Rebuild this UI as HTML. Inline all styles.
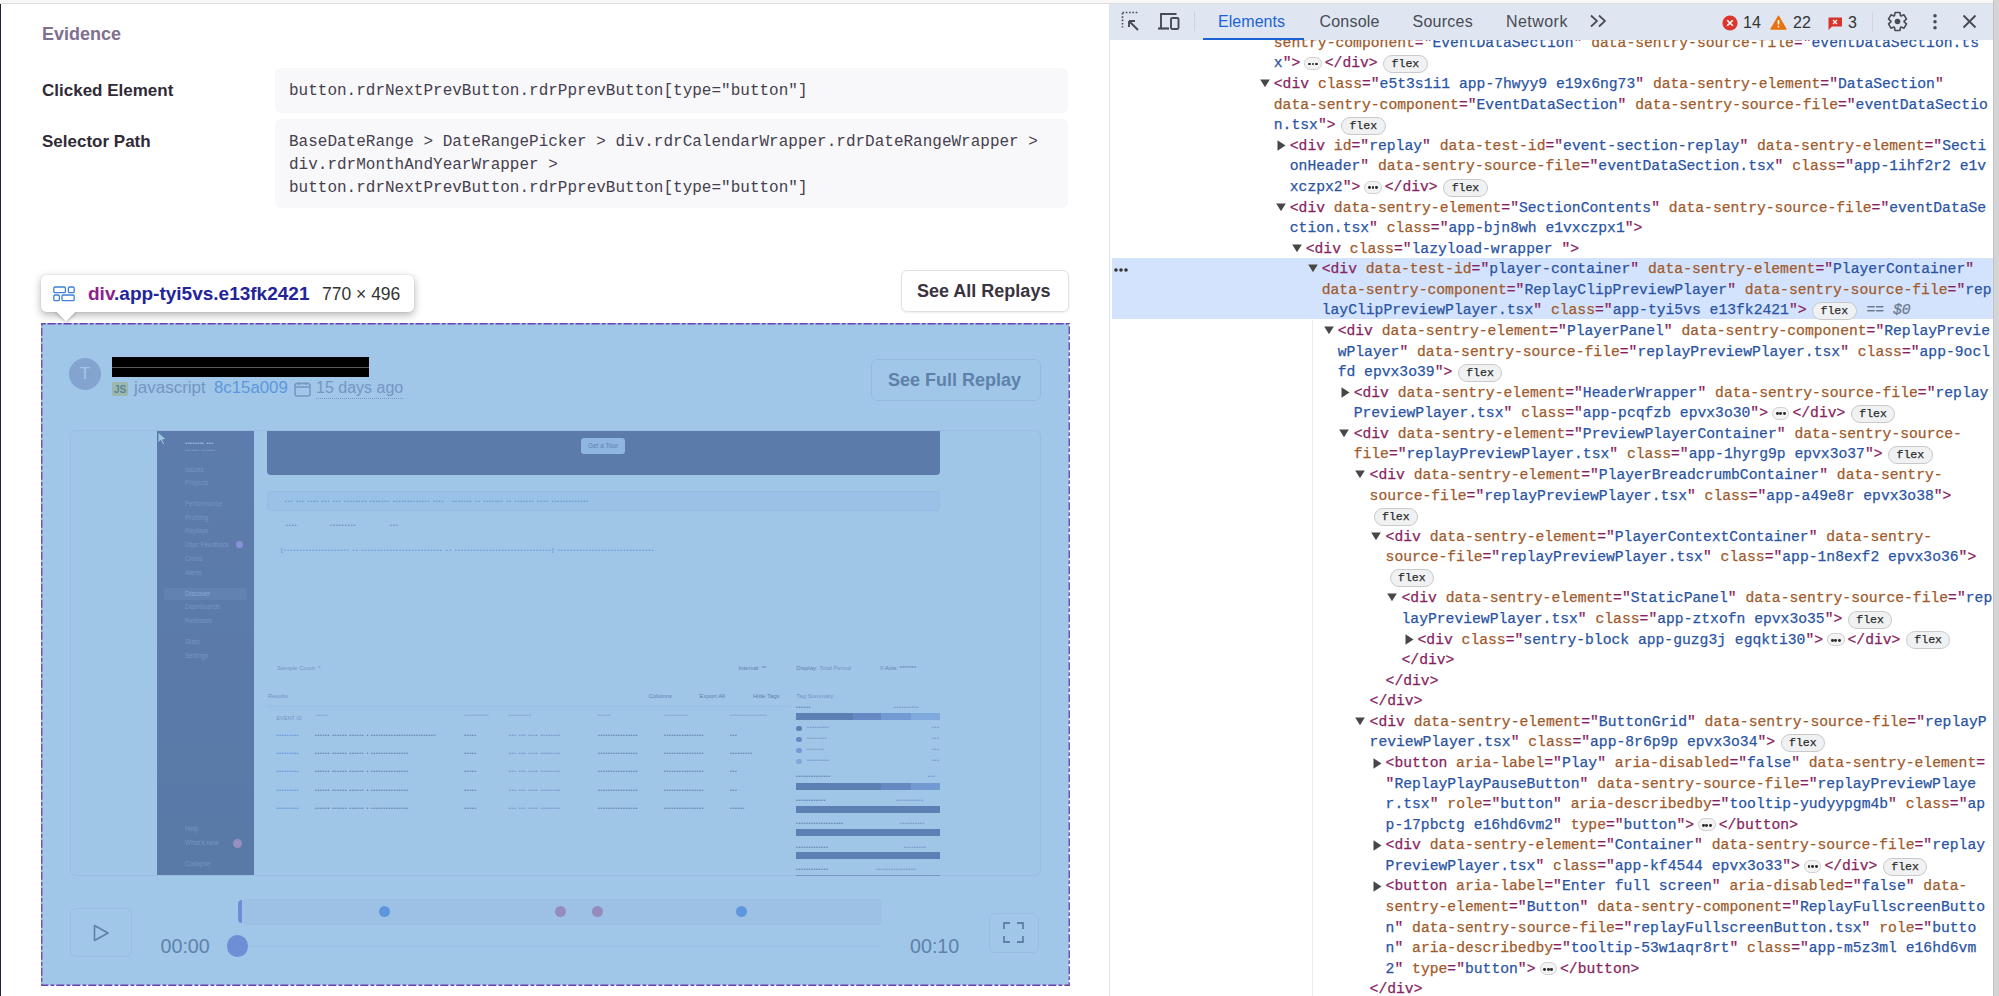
<!DOCTYPE html>
<html><head><meta charset="utf-8">
<style>
*{box-sizing:border-box;margin:0;padding:0}
html,body{width:1999px;height:996px;overflow:hidden;background:#fff}
body{position:relative;font-family:"Liberation Sans",sans-serif;color:#2b2233}
.a{position:absolute}
.topstrip{left:0;top:0;width:1999px;height:3px;background:#f8f8f8}
.topline{left:0;top:3px;width:1999px;height:1px;background:#dcdcdc}
.lborder{left:0;top:4px;width:1.4px;height:992px;background:#2c1c3c}
.lbl{position:absolute;left:42px;font-weight:700;font-size:17px;color:#302a36;white-space:pre}
.codebox{position:absolute;left:275px;width:793px;background:#f8f8fa;border-radius:6px}
.mono{font-family:"Liberation Mono",monospace;font-size:16px;color:#463f4e;white-space:pre;position:absolute;left:289px}
/* devtools */
.dt{left:1109px;top:4px;width:890px;height:992px;background:#fff}
.dtbar{left:1109px;top:4px;width:884.3px;height:36px;background:#dfe6f1}
.dtl{left:1109.2px;top:4px;width:1.2px;height:992px;background:#dbe4ee}
.tab{position:absolute;top:12px;font-size:16px;color:#474b52;white-space:pre;line-height:20px}
.row{position:absolute;-webkit-text-stroke:0.25px;font-family:"Liberation Mono",monospace;font-size:14.7px;line-height:20.55px;height:20.55px;white-space:pre;color:#1f1f1f}
.tri{position:absolute;line-height:0}
.eb{display:inline-block;width:17.5px;height:13px;border:1px solid #cfcfcf;background:#f3f3f3;border-radius:7px;vertical-align:middle;margin:0 3px 0 4px;position:relative;top:0px;text-align:center;line-height:0;padding-top:3.4px}
.eb i{display:inline-block;width:2.8px;height:2.8px;border-radius:50%;background:#2a2a2a;margin:0 0.4px}
.fb{display:inline-block;font-family:"Liberation Mono",monospace;font-size:11.5px;line-height:15.5px;height:18px;padding:0 8px;border:1px solid #c9c9c9;background:#f0f1f3;border-radius:9px;color:#2a2a2a;margin-left:5.5px;vertical-align:middle;position:relative;top:0.5px;width:44.5px;padding:0;text-align:center}
.fb.f0{margin-left:4px}
.s0{color:#6c7a8c;margin-left:10px}
.s0 em{font-style:italic}
.sel{left:1112px;top:258px;width:882px;height:60.6px;background:#d3e3fd}
.guide{left:1312px;top:320px;width:1px;height:676px;background:#ececec}
#player div[style*="font-size:5px"]{font-weight:700}
.sb{left:1993.3px;top:0;width:6px;height:996px;background:#d4d3d5;border-left:1.5px solid #c3c3c5}
</style></head><body>
<div class="a topstrip"></div>
<div class="a topline"></div>
<div class="a lborder"></div>

<!-- left page -->
<div class="a" style="left:42px;top:23px;font-size:18px;font-weight:700;color:#80708f;line-height:22px">Evidence</div>
<div class="lbl" style="top:80.4px;line-height:22px">Clicked Element</div>
<div class="lbl" style="top:131.4px;line-height:22px">Selector Path</div>
<div class="codebox" style="top:68px;height:45px"></div>
<div class="codebox" style="top:118.5px;height:89px"></div>
<div class="mono" style="top:80px;line-height:22px">button.rdrNextPrevButton.rdrPprevButton[type="button"]</div>
<div class="mono" style="top:130.5px;line-height:23.2px">BaseDateRange &gt; DateRangePicker &gt; div.rdrCalendarWrapper.rdrDateRangeWrapper &gt;
div.rdrMonthAndYearWrapper &gt;
button.rdrNextPrevButton.rdrPprevButton[type="button"]</div>

<!-- See all replays button -->
<div class="a" style="left:900.5px;top:270px;width:168px;height:42px;border:1px solid #e1e0e4;border-radius:6px;box-shadow:0 1px 2px rgba(43,34,51,0.07)"></div>
<div class="a" style="left:917px;top:280px;font-size:18px;font-weight:700;color:#3a3340;line-height:22px;white-space:pre">See All Replays</div>

<!-- player underlying content -->
<div class="a" id="player" style="left:41px;top:323px;width:1028px;height:662px;background:#fff;overflow:hidden">
  <!-- header -->
  <div class="a" style="left:28px;top:35px;width:32px;height:32px;border-radius:50%;background:#a89db4;color:#fff;font-size:17px;text-align:center;line-height:32px">T</div>
  <div class="a" style="left:71px;top:58.5px;width:16px;height:14px;background:#f0d94a;border-radius:2px;font-size:10px;font-weight:700;line-height:15px;text-align:center;color:#3a3a2a">JS</div>
  <div class="a" style="left:93px;top:55px;font-size:17px;color:#80708f;white-space:pre;line-height:20px">javascript</div>
  <div class="a" style="left:173px;top:55px;font-size:16.8px;color:#3d74db;white-space:pre;line-height:20px">8c15a009</div>
  <svg class="a" style="left:253px;top:59px" width="17" height="15" viewBox="0 0 17 15"><rect x="1" y="1.5" width="15" height="12.5" rx="2" fill="none" stroke="#80708f" stroke-width="1.5"/><line x1="1" y1="5" x2="16" y2="5" stroke="#80708f" stroke-width="1.5"/><line x1="5" y1="0" x2="5" y2="3" stroke="#80708f" stroke-width="1.5"/><line x1="12" y1="0" x2="12" y2="3" stroke="#80708f" stroke-width="1.5"/></svg>
  <div class="a" style="left:275px;top:55px;font-size:16px;color:#80708f;white-space:pre;line-height:20px;border-bottom:1.5px dotted #80708f;height:21px">15 days ago</div>
  <div class="a" style="left:830px;top:36px;width:170px;height:42px;border:1px solid #e0dce5;border-radius:6px"></div>
  <div class="a" style="left:847px;top:46px;font-size:18px;font-weight:700;color:#3e3446;white-space:pre;line-height:22px">See Full Replay</div>

  <!-- replay frame -->
  <div class="a" style="left:29px;top:107px;width:971px;height:446px;border:1px solid #e6e3ea;border-radius:6px;background:#fbfbfc"></div>
  <div class="a" style="left:116px;top:108px;width:97px;height:444px;background:linear-gradient(180deg,#3b2852 0%,#35224a 50%,#2f1f40 100%)">
    <div class="a" style="left:28px;top:7.5px;font-size:6px;line-height:8px;color:#e8e0f0;white-space:pre;letter-spacing:0.3px">•••••••• •••</div>
    <div class="a" style="left:28px;top:15px;font-size:5px;line-height:8px;color:#8f81a6;white-space:pre;letter-spacing:0.3px">••••••• •••••••</div>
    <div class="a" style="left:7px;top:156.5px;width:83px;height:12.5px;border-radius:3px;background:rgba(255,255,255,0.10)"></div>
    <div class="a" style="left:28px;top:33.8px;font-size:6.5px;line-height:10px;color:#7d6f98;white-space:pre">Issues</div>
    <div class="a" style="left:28px;top:47.3px;font-size:6.5px;line-height:10px;color:#7d6f98;white-space:pre">Projects</div>
    <div class="a" style="left:28px;top:68.3px;font-size:6.5px;line-height:10px;color:#7d6f98;white-space:pre">Performance</div>
    <div class="a" style="left:28px;top:81.6px;font-size:6.5px;line-height:10px;color:#7d6f98;white-space:pre">Profiling</div>
    <div class="a" style="left:28px;top:95.3px;font-size:6.5px;line-height:10px;color:#7d6f98;white-space:pre">Replays</div>
    <div class="a" style="left:28px;top:108.8px;font-size:6.5px;line-height:10px;color:#7d6f98;white-space:pre">User Feedback</div>
    <div class="a" style="left:28px;top:122.6px;font-size:6.5px;line-height:10px;color:#7d6f98;white-space:pre">Crons</div>
    <div class="a" style="left:28px;top:136.7px;font-size:6.5px;line-height:10px;color:#7d6f98;white-space:pre">Alerts</div>
    <div class="a" style="left:28px;top:157.5px;font-size:6.5px;line-height:10px;color:#b9acd0;white-space:pre">Discover</div>
    <div class="a" style="left:28px;top:170.7px;font-size:6.5px;line-height:10px;color:#7d6f98;white-space:pre">Dashboards</div>
    <div class="a" style="left:28px;top:184.7px;font-size:6.5px;line-height:10px;color:#7d6f98;white-space:pre">Releases</div>
    <div class="a" style="left:28px;top:205.5px;font-size:6.5px;line-height:10px;color:#7d6f98;white-space:pre">Stats</div>
    <div class="a" style="left:28px;top:219.6px;font-size:6.5px;line-height:10px;color:#7d6f98;white-space:pre">Settings</div>
    <div class="a" style="left:28px;top:393.0px;font-size:6.5px;line-height:10px;color:#7d6f98;white-space:pre">Help</div>
    <div class="a" style="left:28px;top:407.0px;font-size:6.5px;line-height:10px;color:#7d6f98;white-space:pre">What's new</div>
    <div class="a" style="left:28px;top:428.0px;font-size:6.5px;line-height:10px;color:#7d6f98;white-space:pre">Collapse</div>
    <div class="a" style="left:79px;top:110px;width:7px;height:7px;border-radius:50%;background:#b463d0"></div>
    <div class="a" style="left:76px;top:408px;width:9px;height:9px;border-radius:50%;background:#e05f8a"></div>
  </div>
  <svg class="a" style="left:116px;top:108px" width="11" height="15" viewBox="0 0 11 15"><path d="M1 1L1 12L3.8 9.4L5.8 13.8L7.6 13L5.7 8.8L9.5 8.6Z" fill="#fff" stroke="#222" stroke-width="1"/></svg>
  <!-- banner -->
  <div class="a" style="left:226px;top:108px;width:673px;height:44px;background:#36254a;border-radius:0 0 4px 4px"></div>
  <div class="a" style="left:540px;top:115px;width:44px;height:16px;background:#c9cfe6;border-radius:3px;font-size:6.5px;color:#3e3446;text-align:center;line-height:16px">Get a Tour</div>
  <!-- alert -->
  <div class="a" style="left:226px;top:168px;width:673px;height:20px;background:#ecf2fb;border:1px solid #dbe6f6;border-radius:3px"></div>
  <div class="a" style="left:244px;top:172.7px;font-size:5px;line-height:10px;color:#4a6fb0;white-space:pre;letter-spacing:1.15px">••• ••• •••• ••• ••• •••••••• ••••••• ••••••••••••• ••••   ••••••• •• ••••••• •• ••••••• •••• •••••••••••••</div>
  <div class="a" style="left:245px;top:197.4px;font-size:5px;line-height:10px;color:#555;white-space:pre;letter-spacing:1.2px">••••</div>
  <div class="a" style="left:289px;top:197.4px;font-size:5px;line-height:10px;color:#555;white-space:pre;letter-spacing:1.2px">•••••••••</div>
  <div class="a" style="left:349px;top:197.4px;font-size:5px;line-height:10px;color:#555;white-space:pre;letter-spacing:1.2px">•••</div>
  <div class="a" style="left:240px;top:222.2px;font-size:5px;line-height:10px;color:#4a7bd0;white-space:pre;letter-spacing:1.38px">[••••••••••••••••••••• •• •••••••••••••••••••••••••• •• •••••••••••••••••••••••••••••••] •••••••••••••••••••••••••••••••</div>
  <div class="a" style="left:236px;top:339.7px;font-size:6px;line-height:10px;color:#80708f;white-space:pre;">Sample Count  *</div>
  <div class="a" style="left:697.4px;top:339.7px;font-size:6px;line-height:10px;color:#3e3446;white-space:pre;">Interval: **</div>
  <div class="a" style="left:755.3px;top:339.7px;font-size:6px;line-height:10px;color:#3e3446;white-space:pre;">Display: <span style="color:#80708f">Total Period</span></div>
  <div class="a" style="left:838.5px;top:339.7px;font-size:6px;line-height:10px;color:#3e3446;white-space:pre;">Y-Axis: *******</div>
  <div class="a" style="left:226.7px;top:367.9px;font-size:6px;line-height:10px;color:#80708f;white-space:pre;">Results</div>
  <div class="a" style="left:607.4px;top:368.4px;font-size:6px;line-height:10px;color:#3e3446;white-space:pre;">Columns</div>
  <div class="a" style="left:658.6px;top:368.4px;font-size:6px;line-height:10px;color:#3e3446;white-space:pre;">Export All</div>
  <div class="a" style="left:712px;top:368.4px;font-size:6px;line-height:10px;color:#3e3446;white-space:pre;">Hide Tags</div>
  <div class="a" style="left:755.3px;top:368.4px;font-size:6px;line-height:10px;color:#80708f;white-space:pre;">Tag Summary</div>
  <div class="a" style="left:226px;top:383px;width:522px;height:1px;background:#ebe8ef"></div>
  <div class="a" style="left:235.4px;top:389.6px;font-size:5.5px;line-height:10px;color:#80708f;white-space:pre;">EVENT ID</div>
  <div class="a" style="left:275px;top:387.4px;font-size:5px;line-height:10px;color:#9a8fab;white-space:pre;letter-spacing:0.75px;">•••••</div>
  <div class="a" style="left:423.3px;top:387.4px;font-size:5px;line-height:10px;color:#9a8fab;white-space:pre;letter-spacing:0.75px;">••••••••••</div>
  <div class="a" style="left:468px;top:387.4px;font-size:5px;line-height:10px;color:#9a8fab;white-space:pre;letter-spacing:0.75px;">•••••••••</div>
  <div class="a" style="left:557px;top:387.4px;font-size:5px;line-height:10px;color:#9a8fab;white-space:pre;letter-spacing:0.75px;">•••••</div>
  <div class="a" style="left:623px;top:387.4px;font-size:5px;line-height:10px;color:#9a8fab;white-space:pre;letter-spacing:0.75px;">••••••••••</div>
  <div class="a" style="left:689px;top:387.4px;font-size:5px;line-height:10px;color:#9a8fab;white-space:pre;letter-spacing:0.75px;">•••••••••••••••</div>
  <div class="a" style="left:235.4px;top:407.2px;font-size:5px;line-height:10px;color:#3d74db;white-space:pre;letter-spacing:0.75px;">•••••••••</div>
  <div class="a" style="left:235.4px;top:425.3px;font-size:5px;line-height:10px;color:#3d74db;white-space:pre;letter-spacing:0.75px;">•••••••••</div>
  <div class="a" style="left:235.4px;top:443.3px;font-size:5px;line-height:10px;color:#3d74db;white-space:pre;letter-spacing:0.75px;">•••••••••</div>
  <div class="a" style="left:235.4px;top:461.9px;font-size:5px;line-height:10px;color:#3d74db;white-space:pre;letter-spacing:0.75px;">•••••••••</div>
  <div class="a" style="left:235.4px;top:480.0px;font-size:5px;line-height:10px;color:#3d74db;white-space:pre;letter-spacing:0.75px;">•••••••••</div>
  <div class="a" style="left:274px;top:407.2px;font-size:5px;line-height:10px;color:#3e3446;white-space:pre;letter-spacing:0.75px;">•••••• •••••• •••••• • ••••••••••••••••••••••••••</div>
  <div class="a" style="left:274px;top:425.3px;font-size:5px;line-height:10px;color:#3e3446;white-space:pre;letter-spacing:0.75px;">•••••• •••••• •••••• • •••••••••••••••</div>
  <div class="a" style="left:274px;top:443.3px;font-size:5px;line-height:10px;color:#3e3446;white-space:pre;letter-spacing:0.75px;">•••••• •••••• •••••• • •••••••••••••••</div>
  <div class="a" style="left:274px;top:461.9px;font-size:5px;line-height:10px;color:#3e3446;white-space:pre;letter-spacing:0.75px;">•••••• •••••• •••••• • •••••••••••••••</div>
  <div class="a" style="left:274px;top:480.0px;font-size:5px;line-height:10px;color:#3e3446;white-space:pre;letter-spacing:0.75px;">•••••• •••••• •••••• • •••••••••••••••</div>
  <div class="a" style="left:423.3px;top:407.2px;font-size:5px;line-height:10px;color:#3e3446;white-space:pre;letter-spacing:0.75px;">•••••</div>
  <div class="a" style="left:423.3px;top:425.3px;font-size:5px;line-height:10px;color:#3e3446;white-space:pre;letter-spacing:0.75px;">•••••</div>
  <div class="a" style="left:423.3px;top:443.3px;font-size:5px;line-height:10px;color:#3e3446;white-space:pre;letter-spacing:0.75px;">•••••</div>
  <div class="a" style="left:423.3px;top:461.9px;font-size:5px;line-height:10px;color:#3e3446;white-space:pre;letter-spacing:0.75px;">•••••</div>
  <div class="a" style="left:423.3px;top:480.0px;font-size:5px;line-height:10px;color:#3e3446;white-space:pre;letter-spacing:0.75px;">•••••</div>
  <div class="a" style="left:468px;top:407.2px;font-size:5px;line-height:10px;color:#80708f;white-space:pre;letter-spacing:0.75px;">••• ••• •••• ••••••••</div>
  <div class="a" style="left:468px;top:425.3px;font-size:5px;line-height:10px;color:#80708f;white-space:pre;letter-spacing:0.75px;">••• ••• •••• ••••••••</div>
  <div class="a" style="left:468px;top:443.3px;font-size:5px;line-height:10px;color:#80708f;white-space:pre;letter-spacing:0.75px;">••• ••• •••• ••••••••</div>
  <div class="a" style="left:468px;top:461.9px;font-size:5px;line-height:10px;color:#80708f;white-space:pre;letter-spacing:0.75px;">••• ••• •••• ••••••••</div>
  <div class="a" style="left:468px;top:480.0px;font-size:5px;line-height:10px;color:#80708f;white-space:pre;letter-spacing:0.75px;">••• ••• •••• ••••••••</div>
  <div class="a" style="left:557px;top:407.2px;font-size:5px;line-height:10px;color:#3e3446;white-space:pre;letter-spacing:0.75px;">••••••••••••••••</div>
  <div class="a" style="left:557px;top:425.3px;font-size:5px;line-height:10px;color:#3e3446;white-space:pre;letter-spacing:0.75px;">••••••••••••••••</div>
  <div class="a" style="left:557px;top:443.3px;font-size:5px;line-height:10px;color:#3e3446;white-space:pre;letter-spacing:0.75px;">••••••••••••••••</div>
  <div class="a" style="left:557px;top:461.9px;font-size:5px;line-height:10px;color:#3e3446;white-space:pre;letter-spacing:0.75px;">••••••••••••••••</div>
  <div class="a" style="left:557px;top:480.0px;font-size:5px;line-height:10px;color:#3e3446;white-space:pre;letter-spacing:0.75px;">••••••••••••••••</div>
  <div class="a" style="left:623px;top:407.2px;font-size:5px;line-height:10px;color:#3e3446;white-space:pre;letter-spacing:0.75px;">••••••••••••••••</div>
  <div class="a" style="left:623px;top:425.3px;font-size:5px;line-height:10px;color:#3e3446;white-space:pre;letter-spacing:0.75px;">••••••••••••••••</div>
  <div class="a" style="left:623px;top:443.3px;font-size:5px;line-height:10px;color:#3e3446;white-space:pre;letter-spacing:0.75px;">••••••••••••••••</div>
  <div class="a" style="left:623px;top:461.9px;font-size:5px;line-height:10px;color:#3e3446;white-space:pre;letter-spacing:0.75px;">••••••••••••••••</div>
  <div class="a" style="left:623px;top:480.0px;font-size:5px;line-height:10px;color:#3e3446;white-space:pre;letter-spacing:0.75px;">••••••••••••••••</div>
  <div class="a" style="left:689px;top:407.2px;font-size:5px;line-height:10px;color:#3e3446;white-space:pre;letter-spacing:0.75px;">•••</div>
  <div class="a" style="left:689px;top:425.3px;font-size:5px;line-height:10px;color:#3e3446;white-space:pre;letter-spacing:0.75px;">•••••••••</div>
  <div class="a" style="left:689px;top:443.3px;font-size:5px;line-height:10px;color:#3e3446;white-space:pre;letter-spacing:0.75px;">•••</div>
  <div class="a" style="left:689px;top:461.9px;font-size:5px;line-height:10px;color:#3e3446;white-space:pre;letter-spacing:0.75px;">•••</div>
  <div class="a" style="left:689px;top:480.0px;font-size:5px;line-height:10px;color:#3e3446;white-space:pre;letter-spacing:0.75px;">••••••</div>
  <div class="a" style="left:755px;top:378.5px;font-size:5px;line-height:10px;color:#3e3446;white-space:pre;letter-spacing:0.75px;">••••••</div>
  <div class="a" style="left:853px;top:378.5px;font-size:5px;line-height:10px;color:#80708f;white-space:pre;letter-spacing:0.75px;">••••••••••</div>
  <div class="a" style="left:755px;top:389.5px;width:144px;height:7px;background:linear-gradient(90deg,#3a3466 0 39.6%,#524f94 39.6% 59.2%,#7b7fc0 59.2% 80%,#9fa6dc 80%)"></div>
  <div class="a" style="left:755px;top:402.7px;width:5.5px;height:5.5px;border-radius:50%;background:#3a3466"></div>
  <div class="a" style="left:766px;top:399.0px;font-size:5px;line-height:10px;color:#80708f;white-space:pre;letter-spacing:0.75px;">•••••••••</div>
  <div class="a" style="left:891px;top:399.0px;font-size:5px;line-height:10px;color:#80708f;white-space:pre;letter-spacing:0.75px;">•••</div>
  <div class="a" style="left:755px;top:413.7px;width:5.5px;height:5.5px;border-radius:50%;background:#524f94"></div>
  <div class="a" style="left:766px;top:410.0px;font-size:5px;line-height:10px;color:#80708f;white-space:pre;letter-spacing:0.75px;">••••••••</div>
  <div class="a" style="left:891px;top:410.0px;font-size:5px;line-height:10px;color:#80708f;white-space:pre;letter-spacing:0.75px;">•••</div>
  <div class="a" style="left:755px;top:424.7px;width:5.5px;height:5.5px;border-radius:50%;background:#7b7fc0"></div>
  <div class="a" style="left:766px;top:421.0px;font-size:5px;line-height:10px;color:#80708f;white-space:pre;letter-spacing:0.75px;">•••••••</div>
  <div class="a" style="left:891px;top:421.0px;font-size:5px;line-height:10px;color:#80708f;white-space:pre;letter-spacing:0.75px;">•••</div>
  <div class="a" style="left:755px;top:435.7px;width:5.5px;height:5.5px;border-radius:50%;background:#9fa6dc"></div>
  <div class="a" style="left:766px;top:432.0px;font-size:5px;line-height:10px;color:#80708f;white-space:pre;letter-spacing:0.75px;">•••••••••</div>
  <div class="a" style="left:891px;top:432.0px;font-size:5px;line-height:10px;color:#80708f;white-space:pre;letter-spacing:0.75px;">•••</div>
  <div class="a" style="left:755px;top:448.3px;font-size:5px;line-height:10px;color:#3e3446;white-space:pre;letter-spacing:0.75px;">••••••••••••••</div>
  <div class="a" style="left:887px;top:448.3px;font-size:5px;line-height:10px;color:#80708f;white-space:pre;letter-spacing:0.75px;">•••</div>
  <div class="a" style="left:755px;top:460px;width:144px;height:7px;background:linear-gradient(90deg,#3a3466 0 59.2%,#524f94 59.2% 80%,#7b7fc0 80%)"></div>
  <div class="a" style="left:755px;top:472.0px;font-size:5px;line-height:10px;color:#3e3446;white-space:pre;letter-spacing:0.75px;">••••••••••••</div>
  <div class="a" style="left:855px;top:472.0px;font-size:5px;line-height:10px;color:#80708f;white-space:pre;letter-spacing:0.75px;">•••••••••••</div>
  <div class="a" style="left:755px;top:483px;width:144px;height:7px;background:#3a3466"></div>
  <div class="a" style="left:755px;top:495.0px;font-size:5px;line-height:10px;color:#3e3446;white-space:pre;letter-spacing:0.75px;">•••••••••••••••••••</div>
  <div class="a" style="left:859px;top:495.0px;font-size:5px;line-height:10px;color:#80708f;white-space:pre;letter-spacing:0.75px;">••••••••••</div>
  <div class="a" style="left:755px;top:506px;width:144px;height:7px;background:#3a3466"></div>
  <div class="a" style="left:755px;top:518.5px;font-size:5px;line-height:10px;color:#3e3446;white-space:pre;letter-spacing:0.75px;">•••••••••••••</div>
  <div class="a" style="left:863px;top:518.5px;font-size:5px;line-height:10px;color:#80708f;white-space:pre;letter-spacing:0.75px;">•••••••••</div>
  <div class="a" style="left:755px;top:529px;width:144px;height:7px;background:#3a3466"></div>
  <div class="a" style="left:755px;top:540.5px;font-size:5px;line-height:10px;color:#3e3446;white-space:pre;letter-spacing:0.75px;">•••••••••••••</div>
  <div class="a" style="left:835px;top:540.5px;font-size:5px;line-height:10px;color:#80708f;white-space:pre;letter-spacing:0.75px;">••••••••••••••••</div>
  <div class="a" style="left:755px;top:552px;width:144px;height:1px;background:#80708f"></div>
  <!-- controls -->
  <div class="a" style="left:29px;top:585px;width:62px;height:49px;border:1px solid #e6e3ea;border-radius:6px"></div>
  <svg class="a" style="left:52px;top:601px" width="17" height="18" viewBox="0 0 17 18"><path d="M1.5 1.5L15 9L1.5 16.5Z" fill="none" stroke="#3e3446" stroke-width="1.6" stroke-linejoin="round"/></svg>
  <div class="a" style="left:119.5px;top:612px;font-size:19.7px;color:#3e3446;white-space:pre;line-height:22px">00:00</div>
  <div class="a" style="left:201px;top:576px;width:640px;height:26px;background:#f3f1f6;border-radius:4px"></div>
  <div class="a" style="left:197px;top:577px;width:4px;height:23px;border-radius:4px 0 0 4px;background:#6c5fc7"></div>
  <div class="a" style="left:206px;top:622.5px;width:635px;height:1px;background:#f1eff4"></div>
  <div class="a" style="left:185.5px;top:612px;width:21.5px;height:21.5px;border-radius:50%;background:#6c5fc7"></div>
  <div class="a" style="left:337.5px;top:583px;width:11px;height:11px;border-radius:50%;background:#3d74db"></div>
  <div class="a" style="left:514px;top:583px;width:11px;height:11px;border-radius:50%;background:#e1567c"></div>
  <div class="a" style="left:551px;top:583px;width:11px;height:11px;border-radius:50%;background:#e1567c"></div>
  <div class="a" style="left:695px;top:583px;width:11px;height:11px;border-radius:50%;background:#3d74db"></div>
  <div class="a" style="left:869px;top:612px;font-size:19.7px;color:#3e3446;white-space:pre;line-height:22px">00:10</div>
  <div class="a" style="left:948px;top:590px;width:50px;height:40px;border:1px solid #e6e3ea;border-radius:6px"></div>
  <svg class="a" style="left:962px;top:599px" width="21" height="21" viewBox="0 0 21 21"><path d="M1 7V1H7M14 1H20V7M20 14V20H14M7 20H1V14" fill="none" stroke="#3e3446" stroke-width="1.8"/></svg>
</div>
<!-- highlight overlay -->
<div class="a" style="left:41px;top:323px;width:1028px;height:662px;background:rgba(111,168,220,0.66)"></div>
<svg class="a" style="left:40px;top:322px" width="1031" height="665" viewBox="0 0 1031 665"><rect x="1.75" y="1.75" width="1027.5" height="661.5" fill="none" stroke="#6b3fb0" stroke-width="1.3" stroke-dasharray="3.8 2.1 8 2.1"/></svg>
<!-- redaction -->
<div class="a" style="left:112px;top:357px;width:257px;height:20px;background:#000"></div>
<div class="a" style="left:112px;top:366.5px;width:257px;height:0.6px;background:rgba(255,255,255,0.35)"></div>
<!-- tooltip -->
<div class="a" style="left:41px;top:275px;width:373px;height:37px;background:#fff;border-radius:5px;box-shadow:0 3px 8px rgba(0,0,0,0.30),0 0 1px rgba(0,0,0,0.25)"></div>
<svg class="a" style="left:50px;top:308px;overflow:visible" width="32" height="16" viewBox="0 0 32 16"><defs><filter id="sh" x="-50%" y="-50%" width="200%" height="200%"><feGaussianBlur stdDeviation="2.2"/></filter></defs><path d="M5.7 3.5L16 14L26.2 3.5Z" fill="rgba(0,0,0,0.35)" filter="url(#sh)"/><rect x="0" y="0" width="32" height="3.8" fill="#fff"/><path d="M5.7 3L16 13.6L26.2 3Z" fill="#fff"/></svg>
<svg class="a" style="left:53px;top:285.5px" width="22" height="16" viewBox="0 0 22 16"><rect x="0.8" y="1" width="11.6" height="5.6" rx="1.2" fill="none" stroke="#3d7fd9" stroke-width="1.3"/><rect x="15.4" y="1" width="5.8" height="5.6" rx="1.2" fill="none" stroke="#3d7fd9" stroke-width="1.3"/><rect x="0.8" y="9" width="5.6" height="5.6" rx="1.2" fill="none" stroke="#3d7fd9" stroke-width="1.3"/><rect x="9" y="9" width="12.2" height="5.6" rx="1.2" fill="none" stroke="#3d7fd9" stroke-width="1.3"/></svg>
<div class="a" style="left:88px;top:283px;font-size:19px;font-weight:700;white-space:pre;line-height:22px;color:#23239a"><span style="color:#8e1f8c">div</span>.app-tyi5vs.e13fk2421</div>
<div class="a" style="left:322px;top:283px;font-size:17.5px;white-space:pre;line-height:22px;color:#333">770 × 496</div>


<!-- devtools -->
<div class="a dt"></div>
<div class="a sel"></div>
<div class="a guide"></div>
<div class="row" style="left:1273.80px;top:32.90px"><span style="color:#a05a2b">sentry-component</span><span style="color:#881f5e">=&quot;</span><span style="color:#2a54a3">EventDataSection</span><span style="color:#881f5e">&quot;</span> <span style="color:#a05a2b">data-sentry-source-file</span><span style="color:#881f5e">=&quot;</span><span style="color:#2a54a3">eventDataSection.ts</span></div>
<div class="row" style="left:1273.80px;top:53.47px"><span style="color:#2a54a3">x</span><span style="color:#881f5e">&quot;&gt;</span><span class="eb"><i></i><i></i><i></i></span><span style="color:#881f5e">&lt;/div&gt;</span><span class="fb">flex</span></div>
<div class="tri" style="left:1259.6px;top:79.0px"><svg width="10" height="8.5" viewBox="0 0 10 8.5"><path d="M0.2 0.6H9.8L5 8.2Z" fill="#474747"/></svg></div><div class="row" style="left:1273.80px;top:74.05px"><span style="color:#881f5e">&lt;div</span> <span style="color:#a05a2b">class</span><span style="color:#881f5e">=&quot;</span><span style="color:#2a54a3">e5t3s1i1 app-7hwyy9 e19x6ng73</span><span style="color:#881f5e">&quot;</span> <span style="color:#a05a2b">data-sentry-element</span><span style="color:#881f5e">=&quot;</span><span style="color:#2a54a3">DataSection</span><span style="color:#881f5e">&quot;</span></div>
<div class="row" style="left:1273.80px;top:94.62px"><span style="color:#a05a2b">data-sentry-component</span><span style="color:#881f5e">=&quot;</span><span style="color:#2a54a3">EventDataSection</span><span style="color:#881f5e">&quot;</span> <span style="color:#a05a2b">data-sentry-source-file</span><span style="color:#881f5e">=&quot;</span><span style="color:#2a54a3">eventDataSectio</span></div>
<div class="row" style="left:1273.80px;top:115.20px"><span style="color:#2a54a3">n.tsx</span><span style="color:#881f5e">&quot;&gt;</span><span class="fb">flex</span></div>
<div class="tri" style="left:1276.8px;top:140.4px"><svg width="9" height="11" viewBox="0 0 9 11"><path d="M0.5 0.3L8.5 5.5L0.5 10.7Z" fill="#474747"/></svg></div><div class="row" style="left:1289.77px;top:135.78px"><span style="color:#881f5e">&lt;div</span> <span style="color:#a05a2b">id</span><span style="color:#881f5e">=&quot;</span><span style="color:#2a54a3">replay</span><span style="color:#881f5e">&quot;</span> <span style="color:#a05a2b">data-test-id</span><span style="color:#881f5e">=&quot;</span><span style="color:#2a54a3">event-section-replay</span><span style="color:#881f5e">&quot;</span> <span style="color:#a05a2b">data-sentry-element</span><span style="color:#881f5e">=&quot;</span><span style="color:#2a54a3">Secti</span></div>
<div class="row" style="left:1289.77px;top:156.35px"><span style="color:#2a54a3">onHeader</span><span style="color:#881f5e">&quot;</span> <span style="color:#a05a2b">data-sentry-source-file</span><span style="color:#881f5e">=&quot;</span><span style="color:#2a54a3">eventDataSection.tsx</span><span style="color:#881f5e">&quot;</span> <span style="color:#a05a2b">class</span><span style="color:#881f5e">=&quot;</span><span style="color:#2a54a3">app-1ihf2r2 e1v</span></div>
<div class="row" style="left:1289.77px;top:176.93px"><span style="color:#2a54a3">xczpx2</span><span style="color:#881f5e">&quot;&gt;</span><span class="eb"><i></i><i></i><i></i></span><span style="color:#881f5e">&lt;/div&gt;</span><span class="fb">flex</span></div>
<div class="tri" style="left:1275.6px;top:202.5px"><svg width="10" height="8.5" viewBox="0 0 10 8.5"><path d="M0.2 0.6H9.8L5 8.2Z" fill="#474747"/></svg></div><div class="row" style="left:1289.77px;top:197.50px"><span style="color:#881f5e">&lt;div</span> <span style="color:#a05a2b">data-sentry-element</span><span style="color:#881f5e">=&quot;</span><span style="color:#2a54a3">SectionContents</span><span style="color:#881f5e">&quot;</span> <span style="color:#a05a2b">data-sentry-source-file</span><span style="color:#881f5e">=&quot;</span><span style="color:#2a54a3">eventDataSe</span></div>
<div class="row" style="left:1289.77px;top:218.07px"><span style="color:#2a54a3">ction.tsx</span><span style="color:#881f5e">&quot;</span> <span style="color:#a05a2b">class</span><span style="color:#881f5e">=&quot;</span><span style="color:#2a54a3">app-bjn8wh e1vxczpx1</span><span style="color:#881f5e">&quot;&gt;</span></div>
<div class="tri" style="left:1291.5px;top:243.7px"><svg width="10" height="8.5" viewBox="0 0 10 8.5"><path d="M0.2 0.6H9.8L5 8.2Z" fill="#474747"/></svg></div><div class="row" style="left:1305.74px;top:238.65px"><span style="color:#881f5e">&lt;div</span> <span style="color:#a05a2b">class</span><span style="color:#881f5e">=&quot;</span><span style="color:#2a54a3">lazyload-wrapper </span><span style="color:#881f5e">&quot;&gt;</span></div>
<div class="tri" style="left:1307.5px;top:264.2px"><svg width="10" height="8.5" viewBox="0 0 10 8.5"><path d="M0.2 0.6H9.8L5 8.2Z" fill="#474747"/></svg></div><div class="row" style="left:1321.71px;top:259.22px"><span style="color:#881f5e">&lt;div</span> <span style="color:#a05a2b">data-test-id</span><span style="color:#881f5e">=&quot;</span><span style="color:#2a54a3">player-container</span><span style="color:#881f5e">&quot;</span> <span style="color:#a05a2b">data-sentry-element</span><span style="color:#881f5e">=&quot;</span><span style="color:#2a54a3">PlayerContainer</span><span style="color:#881f5e">&quot;</span></div>
<div class="row" style="left:1321.71px;top:279.80px"><span style="color:#a05a2b">data-sentry-component</span><span style="color:#881f5e">=&quot;</span><span style="color:#2a54a3">ReplayClipPreviewPlayer</span><span style="color:#881f5e">&quot;</span> <span style="color:#a05a2b">data-sentry-source-file</span><span style="color:#881f5e">=&quot;</span><span style="color:#2a54a3">rep</span></div>
<div class="row" style="left:1321.71px;top:300.37px"><span style="color:#2a54a3">layClipPreviewPlayer.tsx</span><span style="color:#881f5e">&quot;</span> <span style="color:#a05a2b">class</span><span style="color:#881f5e">=&quot;</span><span style="color:#2a54a3">app-tyi5vs e13fk2421</span><span style="color:#881f5e">&quot;&gt;</span><span class="fb">flex</span><span class="s0">== <em>$0</em></span></div>
<div class="tri" style="left:1323.5px;top:325.9px"><svg width="10" height="8.5" viewBox="0 0 10 8.5"><path d="M0.2 0.6H9.8L5 8.2Z" fill="#474747"/></svg></div><div class="row" style="left:1337.68px;top:320.95px"><span style="color:#881f5e">&lt;div</span> <span style="color:#a05a2b">data-sentry-element</span><span style="color:#881f5e">=&quot;</span><span style="color:#2a54a3">PlayerPanel</span><span style="color:#881f5e">&quot;</span> <span style="color:#a05a2b">data-sentry-component</span><span style="color:#881f5e">=&quot;</span><span style="color:#2a54a3">ReplayPrevie</span></div>
<div class="row" style="left:1337.68px;top:341.52px"><span style="color:#2a54a3">wPlayer</span><span style="color:#881f5e">&quot;</span> <span style="color:#a05a2b">data-sentry-source-file</span><span style="color:#881f5e">=&quot;</span><span style="color:#2a54a3">replayPreviewPlayer.tsx</span><span style="color:#881f5e">&quot;</span> <span style="color:#a05a2b">class</span><span style="color:#881f5e">=&quot;</span><span style="color:#2a54a3">app-9ocl</span></div>
<div class="row" style="left:1337.68px;top:362.10px"><span style="color:#2a54a3">fd epvx3o39</span><span style="color:#881f5e">&quot;&gt;</span><span class="fb">flex</span></div>
<div class="tri" style="left:1340.6px;top:387.3px"><svg width="9" height="11" viewBox="0 0 9 11"><path d="M0.5 0.3L8.5 5.5L0.5 10.7Z" fill="#474747"/></svg></div><div class="row" style="left:1353.65px;top:382.67px"><span style="color:#881f5e">&lt;div</span> <span style="color:#a05a2b">data-sentry-element</span><span style="color:#881f5e">=&quot;</span><span style="color:#2a54a3">HeaderWrapper</span><span style="color:#881f5e">&quot;</span> <span style="color:#a05a2b">data-sentry-source-file</span><span style="color:#881f5e">=&quot;</span><span style="color:#2a54a3">replay</span></div>
<div class="row" style="left:1353.65px;top:403.25px"><span style="color:#2a54a3">PreviewPlayer.tsx</span><span style="color:#881f5e">&quot;</span> <span style="color:#a05a2b">class</span><span style="color:#881f5e">=&quot;</span><span style="color:#2a54a3">app-pcqfzb epvx3o30</span><span style="color:#881f5e">&quot;&gt;</span><span class="eb"><i></i><i></i><i></i></span><span style="color:#881f5e">&lt;/div&gt;</span><span class="fb">flex</span></div>
<div class="tri" style="left:1339.4px;top:428.8px"><svg width="10" height="8.5" viewBox="0 0 10 8.5"><path d="M0.2 0.6H9.8L5 8.2Z" fill="#474747"/></svg></div><div class="row" style="left:1353.65px;top:423.82px"><span style="color:#881f5e">&lt;div</span> <span style="color:#a05a2b">data-sentry-element</span><span style="color:#881f5e">=&quot;</span><span style="color:#2a54a3">PreviewPlayerContainer</span><span style="color:#881f5e">&quot;</span> <span style="color:#a05a2b">data-sentry-source-</span></div>
<div class="row" style="left:1353.65px;top:444.40px"><span style="color:#a05a2b">file</span><span style="color:#881f5e">=&quot;</span><span style="color:#2a54a3">replayPreviewPlayer.tsx</span><span style="color:#881f5e">&quot;</span> <span style="color:#a05a2b">class</span><span style="color:#881f5e">=&quot;</span><span style="color:#2a54a3">app-1hyrg9p epvx3o37</span><span style="color:#881f5e">&quot;&gt;</span><span class="fb">flex</span></div>
<div class="tri" style="left:1355.4px;top:470.0px"><svg width="10" height="8.5" viewBox="0 0 10 8.5"><path d="M0.2 0.6H9.8L5 8.2Z" fill="#474747"/></svg></div><div class="row" style="left:1369.62px;top:464.97px"><span style="color:#881f5e">&lt;div</span> <span style="color:#a05a2b">data-sentry-element</span><span style="color:#881f5e">=&quot;</span><span style="color:#2a54a3">PlayerBreadcrumbContainer</span><span style="color:#881f5e">&quot;</span> <span style="color:#a05a2b">data-sentry-</span></div>
<div class="row" style="left:1369.62px;top:485.55px"><span style="color:#a05a2b">source-file</span><span style="color:#881f5e">=&quot;</span><span style="color:#2a54a3">replayPreviewPlayer.tsx</span><span style="color:#881f5e">&quot;</span> <span style="color:#a05a2b">class</span><span style="color:#881f5e">=&quot;</span><span style="color:#2a54a3">app-a49e8r epvx3o38</span><span style="color:#881f5e">&quot;&gt;</span></div>
<div class="row" style="left:1369.62px;top:506.12px"><span class="fb f0">flex</span></div>
<div class="tri" style="left:1371.4px;top:531.7px"><svg width="10" height="8.5" viewBox="0 0 10 8.5"><path d="M0.2 0.6H9.8L5 8.2Z" fill="#474747"/></svg></div><div class="row" style="left:1385.59px;top:526.70px"><span style="color:#881f5e">&lt;div</span> <span style="color:#a05a2b">data-sentry-element</span><span style="color:#881f5e">=&quot;</span><span style="color:#2a54a3">PlayerContextContainer</span><span style="color:#881f5e">&quot;</span> <span style="color:#a05a2b">data-sentry-</span></div>
<div class="row" style="left:1385.59px;top:547.27px"><span style="color:#a05a2b">source-file</span><span style="color:#881f5e">=&quot;</span><span style="color:#2a54a3">replayPreviewPlayer.tsx</span><span style="color:#881f5e">&quot;</span> <span style="color:#a05a2b">class</span><span style="color:#881f5e">=&quot;</span><span style="color:#2a54a3">app-1n8exf2 epvx3o36</span><span style="color:#881f5e">&quot;&gt;</span></div>
<div class="row" style="left:1385.59px;top:567.85px"><span class="fb f0">flex</span></div>
<div class="tri" style="left:1387.4px;top:593.4px"><svg width="10" height="8.5" viewBox="0 0 10 8.5"><path d="M0.2 0.6H9.8L5 8.2Z" fill="#474747"/></svg></div><div class="row" style="left:1401.56px;top:588.42px"><span style="color:#881f5e">&lt;div</span> <span style="color:#a05a2b">data-sentry-element</span><span style="color:#881f5e">=&quot;</span><span style="color:#2a54a3">StaticPanel</span><span style="color:#881f5e">&quot;</span> <span style="color:#a05a2b">data-sentry-source-file</span><span style="color:#881f5e">=&quot;</span><span style="color:#2a54a3">rep</span></div>
<div class="row" style="left:1401.56px;top:609.00px"><span style="color:#2a54a3">layPreviewPlayer.tsx</span><span style="color:#881f5e">&quot;</span> <span style="color:#a05a2b">class</span><span style="color:#881f5e">=&quot;</span><span style="color:#2a54a3">app-ztxofn epvx3o35</span><span style="color:#881f5e">&quot;&gt;</span><span class="fb">flex</span></div>
<div class="tri" style="left:1404.5px;top:634.2px"><svg width="9" height="11" viewBox="0 0 9 11"><path d="M0.5 0.3L8.5 5.5L0.5 10.7Z" fill="#474747"/></svg></div><div class="row" style="left:1417.53px;top:629.57px"><span style="color:#881f5e">&lt;div</span> <span style="color:#a05a2b">class</span><span style="color:#881f5e">=&quot;</span><span style="color:#2a54a3">sentry-block app-guzg3j egqkti30</span><span style="color:#881f5e">&quot;&gt;</span><span class="eb"><i></i><i></i><i></i></span><span style="color:#881f5e">&lt;/div&gt;</span><span class="fb">flex</span></div>
<div class="row" style="left:1401.56px;top:650.15px"><span style="color:#881f5e">&lt;/div&gt;</span></div>
<div class="row" style="left:1385.59px;top:670.72px"><span style="color:#881f5e">&lt;/div&gt;</span></div>
<div class="row" style="left:1369.62px;top:691.30px"><span style="color:#881f5e">&lt;/div&gt;</span></div>
<div class="tri" style="left:1355.4px;top:716.9px"><svg width="10" height="8.5" viewBox="0 0 10 8.5"><path d="M0.2 0.6H9.8L5 8.2Z" fill="#474747"/></svg></div><div class="row" style="left:1369.62px;top:711.88px"><span style="color:#881f5e">&lt;div</span> <span style="color:#a05a2b">data-sentry-element</span><span style="color:#881f5e">=&quot;</span><span style="color:#2a54a3">ButtonGrid</span><span style="color:#881f5e">&quot;</span> <span style="color:#a05a2b">data-sentry-source-file</span><span style="color:#881f5e">=&quot;</span><span style="color:#2a54a3">replayP</span></div>
<div class="row" style="left:1369.62px;top:732.45px"><span style="color:#2a54a3">reviewPlayer.tsx</span><span style="color:#881f5e">&quot;</span> <span style="color:#a05a2b">class</span><span style="color:#881f5e">=&quot;</span><span style="color:#2a54a3">app-8r6p9p epvx3o34</span><span style="color:#881f5e">&quot;&gt;</span><span class="fb">flex</span></div>
<div class="tri" style="left:1372.6px;top:757.6px"><svg width="9" height="11" viewBox="0 0 9 11"><path d="M0.5 0.3L8.5 5.5L0.5 10.7Z" fill="#474747"/></svg></div><div class="row" style="left:1385.59px;top:753.02px"><span style="color:#881f5e">&lt;button</span> <span style="color:#a05a2b">aria-label</span><span style="color:#881f5e">=&quot;</span><span style="color:#2a54a3">Play</span><span style="color:#881f5e">&quot;</span> <span style="color:#a05a2b">aria-disabled</span><span style="color:#881f5e">=&quot;</span><span style="color:#2a54a3">false</span><span style="color:#881f5e">&quot;</span> <span style="color:#a05a2b">data-sentry-element</span><span style="color:#881f5e">=</span></div>
<div class="row" style="left:1385.59px;top:773.60px"><span style="color:#881f5e">&quot;</span><span style="color:#2a54a3">ReplayPlayPauseButton</span><span style="color:#881f5e">&quot;</span> <span style="color:#a05a2b">data-sentry-source-file</span><span style="color:#881f5e">=&quot;</span><span style="color:#2a54a3">replayPreviewPlaye</span></div>
<div class="row" style="left:1385.59px;top:794.17px"><span style="color:#2a54a3">r.tsx</span><span style="color:#881f5e">&quot;</span> <span style="color:#a05a2b">role</span><span style="color:#881f5e">=&quot;</span><span style="color:#2a54a3">button</span><span style="color:#881f5e">&quot;</span> <span style="color:#a05a2b">aria-describedby</span><span style="color:#881f5e">=&quot;</span><span style="color:#2a54a3">tooltip-yudyypgm4b</span><span style="color:#881f5e">&quot;</span> <span style="color:#a05a2b">class</span><span style="color:#881f5e">=&quot;</span><span style="color:#2a54a3">ap</span></div>
<div class="row" style="left:1385.59px;top:814.75px"><span style="color:#2a54a3">p-17pbctg e16hd6vm2</span><span style="color:#881f5e">&quot;</span> <span style="color:#a05a2b">type</span><span style="color:#881f5e">=&quot;</span><span style="color:#2a54a3">button</span><span style="color:#881f5e">&quot;&gt;</span><span class="eb"><i></i><i></i><i></i></span><span style="color:#881f5e">&lt;/button&gt;</span></div>
<div class="tri" style="left:1372.6px;top:839.9px"><svg width="9" height="11" viewBox="0 0 9 11"><path d="M0.5 0.3L8.5 5.5L0.5 10.7Z" fill="#474747"/></svg></div><div class="row" style="left:1385.59px;top:835.32px"><span style="color:#881f5e">&lt;div</span> <span style="color:#a05a2b">data-sentry-element</span><span style="color:#881f5e">=&quot;</span><span style="color:#2a54a3">Container</span><span style="color:#881f5e">&quot;</span> <span style="color:#a05a2b">data-sentry-source-file</span><span style="color:#881f5e">=&quot;</span><span style="color:#2a54a3">replay</span></div>
<div class="row" style="left:1385.59px;top:855.90px"><span style="color:#2a54a3">PreviewPlayer.tsx</span><span style="color:#881f5e">&quot;</span> <span style="color:#a05a2b">class</span><span style="color:#881f5e">=&quot;</span><span style="color:#2a54a3">app-kf4544 epvx3o33</span><span style="color:#881f5e">&quot;&gt;</span><span class="eb"><i></i><i></i><i></i></span><span style="color:#881f5e">&lt;/div&gt;</span><span class="fb">flex</span></div>
<div class="tri" style="left:1372.6px;top:881.1px"><svg width="9" height="11" viewBox="0 0 9 11"><path d="M0.5 0.3L8.5 5.5L0.5 10.7Z" fill="#474747"/></svg></div><div class="row" style="left:1385.59px;top:876.47px"><span style="color:#881f5e">&lt;button</span> <span style="color:#a05a2b">aria-label</span><span style="color:#881f5e">=&quot;</span><span style="color:#2a54a3">Enter full screen</span><span style="color:#881f5e">&quot;</span> <span style="color:#a05a2b">aria-disabled</span><span style="color:#881f5e">=&quot;</span><span style="color:#2a54a3">false</span><span style="color:#881f5e">&quot;</span> <span style="color:#a05a2b">data-</span></div>
<div class="row" style="left:1385.59px;top:897.05px"><span style="color:#a05a2b">sentry-element</span><span style="color:#881f5e">=&quot;</span><span style="color:#2a54a3">Button</span><span style="color:#881f5e">&quot;</span> <span style="color:#a05a2b">data-sentry-component</span><span style="color:#881f5e">=&quot;</span><span style="color:#2a54a3">ReplayFullscreenButto</span></div>
<div class="row" style="left:1385.59px;top:917.62px"><span style="color:#2a54a3">n</span><span style="color:#881f5e">&quot;</span> <span style="color:#a05a2b">data-sentry-source-file</span><span style="color:#881f5e">=&quot;</span><span style="color:#2a54a3">replayFullscreenButton.tsx</span><span style="color:#881f5e">&quot;</span> <span style="color:#a05a2b">role</span><span style="color:#881f5e">=&quot;</span><span style="color:#2a54a3">butto</span></div>
<div class="row" style="left:1385.59px;top:938.20px"><span style="color:#2a54a3">n</span><span style="color:#881f5e">&quot;</span> <span style="color:#a05a2b">aria-describedby</span><span style="color:#881f5e">=&quot;</span><span style="color:#2a54a3">tooltip-53w1aqr8rt</span><span style="color:#881f5e">&quot;</span> <span style="color:#a05a2b">class</span><span style="color:#881f5e">=&quot;</span><span style="color:#2a54a3">app-m5z3ml e16hd6vm</span></div>
<div class="row" style="left:1385.59px;top:958.77px"><span style="color:#2a54a3">2</span><span style="color:#881f5e">&quot;</span> <span style="color:#a05a2b">type</span><span style="color:#881f5e">=&quot;</span><span style="color:#2a54a3">button</span><span style="color:#881f5e">&quot;&gt;</span><span class="eb"><i></i><i></i><i></i></span><span style="color:#881f5e">&lt;/button&gt;</span></div>
<div class="row" style="left:1369.62px;top:979.35px"><span style="color:#881f5e">&lt;/div&gt;</span></div>
<div class="a dtbar"></div>
<div class="a dtl"></div>
<svg class="a" style="left:1121px;top:11px" width="21" height="21" viewBox="0 0 21 21"><path d="M1.5 2V16.5M1.5 1.5H16.5" fill="none" stroke="#474b52" stroke-width="1.6" stroke-dasharray="1.6 1.7"/><path d="M8 10H14M8 10V16M8.5 10.5L17 19" fill="none" stroke="#474b52" stroke-width="1.9"/></svg>
<svg class="a" style="left:1157px;top:12px" width="24" height="19" viewBox="0 0 24 19"><path d="M4 16.5V2H19.5" fill="none" stroke="#474b52" stroke-width="1.9"/><path d="M1 16.5H12" fill="none" stroke="#474b52" stroke-width="2.2"/><rect x="14" y="6" width="7.5" height="11" rx="1.2" fill="none" stroke="#474b52" stroke-width="1.9"/></svg>
<div class="a" style="left:1194px;top:11px;width:1px;height:20px;background:#cdd5e2"></div>
<div class="tab" style="left:1218px;color:#1b63d4;letter-spacing:0.05px">Elements</div>
<div class="a" style="left:1202.5px;top:37.5px;width:101px;height:2.5px;background:#1b63d4"></div>
<div class="tab" style="left:1319.5px;letter-spacing:0.2px">Console</div>
<div class="tab" style="left:1412.5px;letter-spacing:0.25px">Sources</div>
<div class="tab" style="left:1506px;letter-spacing:0.45px">Network</div>
<svg class="a" style="left:1589px;top:14px" width="19" height="14" viewBox="0 0 19 14"><path d="M2 1.5L8 7L2 12.5M10 1.5L16 7L10 12.5" fill="none" stroke="#474b52" stroke-width="1.7"/></svg>
<svg class="a" style="left:1722px;top:15px" width="16" height="16" viewBox="0 0 16 16"><circle cx="8" cy="8" r="7.6" fill="#dc362e"/><path d="M5.2 5.2L10.8 10.8M10.8 5.2L5.2 10.8" stroke="#fff" stroke-width="1.6"/></svg>
<div class="tab" style="left:1743px;top:13px;color:#333">14</div>
<svg class="a" style="left:1770px;top:15px" width="17" height="15" viewBox="0 0 17 15"><path d="M8.5 0.8L16.3 14.2H0.7Z" fill="#e8730e" stroke="#e8730e" stroke-width="1" stroke-linejoin="round"/><path d="M8.5 5V9.5" stroke="#fff" stroke-width="1.6"/><circle cx="8.5" cy="11.6" r="0.9" fill="#fff"/></svg>
<div class="tab" style="left:1793px;top:13px;color:#333">22</div>
<svg class="a" style="left:1828px;top:17px" width="15" height="14" viewBox="0 0 15 14"><path d="M0.5 0.5H14V9.5H4L0.5 13Z" fill="#d8342c"/><path d="M5 3L9 7M9 3L5 7" stroke="#fff" stroke-width="1.2"/></svg>
<div class="tab" style="left:1848px;top:13px;color:#333">3</div>
<div class="a" style="left:1872px;top:12px;width:1px;height:20px;background:#cdd5e2"></div>
<svg class="a" style="left:1887px;top:11px" width="21" height="21" viewBox="0 0 21 21"><path d="M7.51 4.62 L8.02 1.54 L12.98 1.54 L13.49 4.62 L14.10 4.97 L17.02 3.87 L19.50 8.17 L17.09 10.15 L17.09 10.85 L19.50 12.83 L17.02 17.13 L14.10 16.03 L13.49 16.38 L12.98 19.46 L8.02 19.46 L7.51 16.38 L6.90 16.03 L3.98 17.13 L1.50 12.83 L3.91 10.85 L3.91 10.15 L1.50 8.17 L3.98 3.87 L6.90 4.97Z" fill="none" stroke="#474b52" stroke-width="1.6" stroke-linejoin="round"/><circle cx="10.5" cy="10.5" r="2.8" fill="#474b52"/></svg>
<svg class="a" style="left:1931px;top:12px" width="8" height="20" viewBox="0 0 8 20"><circle cx="4" cy="3.8" r="1.75" fill="#474b52"/><circle cx="4" cy="9.8" r="1.75" fill="#474b52"/><circle cx="4" cy="15.8" r="1.75" fill="#474b52"/></svg>
<svg class="a" style="left:1962px;top:14px" width="15" height="15" viewBox="0 0 15 15"><path d="M1.5 1.5L13.5 13.5M13.5 1.5L1.5 13.5" stroke="#474b52" stroke-width="1.9"/></svg>
<div class="a" style="left:1114px;top:266.5px;width:14px;height:4px;line-height:0"><svg width="14" height="4" viewBox="0 0 14 4"><circle cx="2" cy="2" r="1.8" fill="#333"/><circle cx="7" cy="2" r="1.8" fill="#333"/><circle cx="12" cy="2" r="1.8" fill="#333"/></svg></div>

<div class="a sb"></div>
</body></html>
